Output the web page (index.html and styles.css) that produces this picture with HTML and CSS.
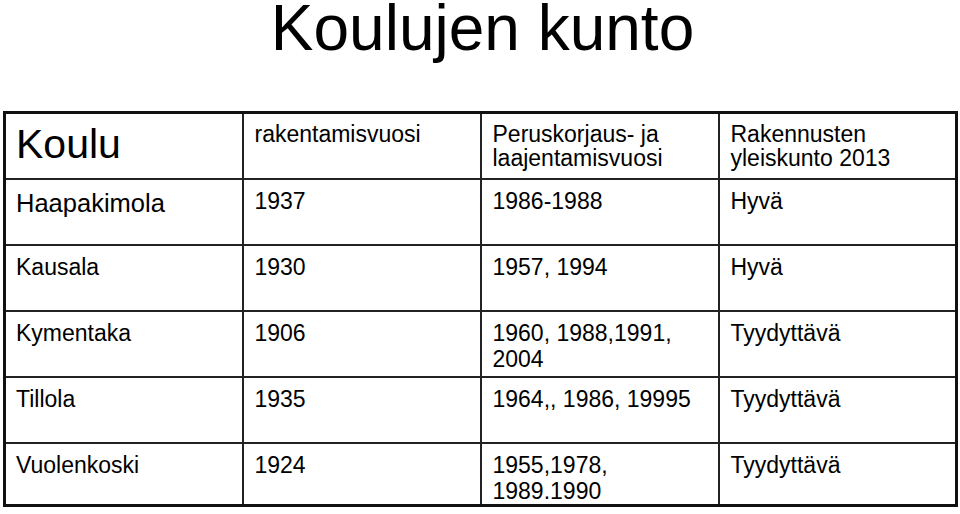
FILE: index.html
```html
<!DOCTYPE html>
<html lang="fi">
<head>
<meta charset="utf-8">
<title>Koulujen kunto</title>
<link rel="stylesheet" href="styles.css">
</head>
<body>
<div class="page">
  <h1 class="title">Koulujen kunto</h1>
  <table class="grid">
    <colgroup><col class="c"><col class="c"><col class="c"><col class="c"></colgroup>
    <tr class="head">
      <td class="koulu">Koulu</td>
      <td>rakentamisvuosi</td>
      <td>Peruskorjaus- ja laajentamisvuosi</td>
      <td>Rakennusten yleiskunto 2013</td>
    </tr>
    <tr>
      <td class="big">Haapakimola</td>
      <td>1937</td>
      <td>1986-1988</td>
      <td>Hyvä</td>
    </tr>
    <tr>
      <td>Kausala</td>
      <td>1930</td>
      <td>1957, 1994</td>
      <td>Hyvä</td>
    </tr>
    <tr>
      <td>Kymentaka</td>
      <td>1906</td>
      <td>1960, 1988,1991, 2004</td>
      <td>Tyydyttävä</td>
    </tr>
    <tr>
      <td>Tillola</td>
      <td>1935</td>
      <td>1964,, 1986, 19995</td>
      <td>Tyydyttävä</td>
    </tr>
    <tr class="last">
      <td>Vuolenkoski</td>
      <td>1924</td>
      <td>1955,1978, 1989.1990</td>
      <td>Tyydyttävä</td>
    </tr>
  </table>
</div>
</body>
</html>
```
FILE: styles.css
```css
html, body {
  margin: 0;
  padding: 0;
  background: #ffffff;
}
body {
  font-family: "Liberation Sans", Arial, sans-serif;
  color: #000000;
  width: 960px;
  height: 514px;
  overflow: hidden;
}
.page {
  padding: 0 2px 0 3px;
}
.title {
  margin: 0 0 58px 0;
  padding: 3px 0 0 4px;
  font-size: 64px;
  line-height: 50px;
  font-weight: normal;
  text-align: center;
}
.grid {
  width: 955px;
  border-collapse: collapse;
  table-layout: fixed;
  border: 3px solid #111111;
}
.grid .c {
  width: 25%;
}
.grid td {
  border: 2px solid #222222;
  vertical-align: top;
  padding: 8px 10px 0 11px;
  font-size: 23px;
  line-height: 26px;
  height: 56px;
  box-sizing: border-box;
}
.grid tr {
  height: 66px;
}
.grid tr.last {
  height: 63px;
}
.grid .head td {
  line-height: 24px;
}
.grid .head td.koulu {
  font-size: 41px;
  line-height: 44px;
  padding-left: 10px;
}
.grid td.big {
  font-size: 25.5px;
  line-height: 30px;
  padding-left: 10px;
}
.grid tr td:first-child {
  padding-left: 10px;
}
```
